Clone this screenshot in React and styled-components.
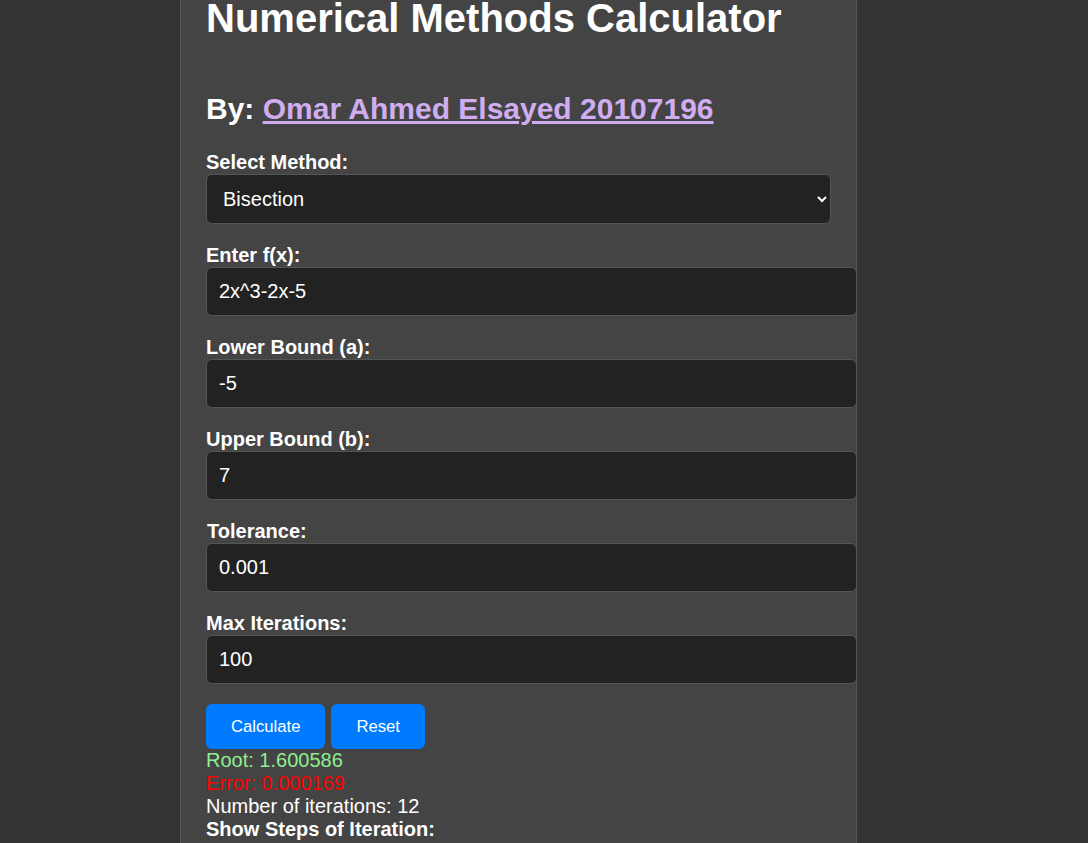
import React, { useState } from "react";
import styled, { createGlobalStyle } from "styled-components";

const GlobalStyle = createGlobalStyle`
  html {
    color-scheme: dark;
  }
  body {
    margin: 0;
    background: #333333;
    color: #ffffff;
    font-family: "Liberation Sans", Arial, sans-serif;
    font-size: 20px;
  }
`;

const Page = styled.div`
  padding-left: 180px;
`;

const Container = styled.div`
  width: 625px;
  margin-top: -30px;
  padding: 25px;
  background: #444444;
  border: 1px solid #555555;
`;

const Title = styled.h1`
  font-size: 40px;
  margin: 0 0 51px;
`;

const Byline = styled.h2`
  font-size: 30px;
  margin: 0 0 25px;

  a {
    color: #d0adf0;
  }
`;

const Group = styled.div`
  margin-bottom: 20px;
`;

const Label = styled.label`
  display: block;
  font-weight: bold;
  margin-left: ${(p) => (p.$indent ? "1px" : "0")};
`;

const Select = styled.select`
  width: 100%;
  padding: 12px;
  font-family: inherit;
  font-size: 20px;
  color: #ffffff;
  background: #222222;
  border: 1px solid #555555;
  border-radius: 6px;
`;

const Input = styled.input`
  display: block;
  width: 100%;
  padding: 12px;
  font-family: inherit;
  font-size: 20px;
  line-height: 23px;
  color: #ffffff;
  background: #222222;
  border: 1px solid #555555;
  border-radius: 6px;
`;

const Buttons = styled.div`
  display: flex;
  gap: 6px;
`;

const Button = styled.button`
  padding: 12.5px 25px;
  font-family: inherit;
  font-size: 16.67px;
  color: #ffffff;
  background: #007bff;
  border: none;
  border-radius: 6px;
`;

const Result = styled.div`
  color: ${(p) => p.$color || "#ffffff"};
  font-weight: ${(p) => (p.$bold ? "bold" : "normal")};
`;

const fields = [
  { id: "fx", label: "Enter f(x):", value: "2x^3-2x-5" },
  { id: "a", label: "Lower Bound (a):", value: "-5" },
  { id: "b", label: "Upper Bound (b):", value: "7" },
  { id: "tol", label: "Tolerance:", value: "0.001", indent: true },
  { id: "max", label: "Max Iterations:", value: "100" },
];

export default function App() {
  const [values, setValues] = useState(
    Object.fromEntries(fields.map((f) => [f.id, f.value]))
  );
  const [method, setMethod] = useState("Bisection");

  function handleChange(e) {
    const { name, value } = e.target;
    setValues({ ...values, [name]: value });
  }

  return (
    <>
      <GlobalStyle />
      <Page>
        <Container>
          <Title>Numerical Methods Calculator</Title>
          <Byline>
            By: <a href="#">Omar Ahmed Elsayed 20107196</a>
          </Byline>
          <Group>
            <Label htmlFor="method">Select Method:</Label>
            <Select
              id="method"
              value={method}
              onChange={(e) => setMethod(e.target.value)}
            >
              <option>Bisection</option>
              <option>False Position</option>
              <option>Newton-Raphson</option>
              <option>Secant</option>
            </Select>
          </Group>
          {fields.map((f) => (
            <Group key={f.id}>
              <Label htmlFor={f.id} $indent={f.indent}>
                {f.label}
              </Label>
              <Input
                id={f.id}
                name={f.id}
                value={values[f.id]}
                onChange={handleChange}
              />
            </Group>
          ))}
          <Buttons>
            <Button>Calculate</Button>
            <Button>Reset</Button>
          </Buttons>
          <Result $color="#90ee90">Root: 1.600586</Result>
          <Result $color="#ff0000">Error: 0.000169</Result>
          <Result>Number of iterations: 12</Result>
          <Result $bold>Show Steps of Iteration:</Result>
        </Container>
      </Page>
    </>
  );
}
